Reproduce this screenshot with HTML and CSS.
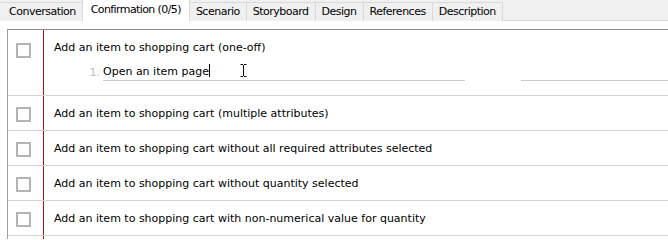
FILE: index.html
```html
<!DOCTYPE html>
<html lang="en">
<head>
  <meta charset="UTF-8" />
  <title>Confirmation</title>
  <link rel="stylesheet" href="styles.css">
</head>
<body>
  <div class="tabs">
    <div class="tab">Conversation</div>
    <div class="tab active">Confirmation (0/5)</div>
    <div class="tab">Scenario</div>
    <div class="tab">Storyboard</div>
    <div class="tab">Design</div>
    <div class="tab">References</div>
    <div class="tab">Description</div>
  </div>

  <div class="panel">
    <div class="list">
      <div class="row first">
        <div class="check"><span class="box"></span></div>
        <div class="body">
          <div class="title">Add an item to shopping cart (one-off)</div>
          <div class="steps">
            <span class="num">1.</span>
            <span class="field step">Open an item page<span class="caret"></span></span>
            <span class="field result"></span>
          </div>
          <svg class="ibeam" width="7" height="13" viewBox="0 0 7 13">
            <path d="M0.5 0.5h2.5M4 0.5h2.5M3.5 1v11M0.5 12.5h2.5M4 12.5h2.5" stroke="#000" stroke-width="1" fill="none"/>
          </svg>
        </div>
      </div>
      <div class="row">
        <div class="check"><span class="box"></span></div>
        <div class="body"><div class="title">Add an item to shopping cart (multiple attributes)</div></div>
      </div>
      <div class="row">
        <div class="check"><span class="box"></span></div>
        <div class="body"><div class="title">Add an item to shopping cart without all required attributes selected</div></div>
      </div>
      <div class="row">
        <div class="check"><span class="box"></span></div>
        <div class="body"><div class="title">Add an item to shopping cart without quantity selected</div></div>
      </div>
      <div class="row">
        <div class="check"><span class="box"></span></div>
        <div class="body"><div class="title">Add an item to shopping cart with non-numerical value for quantity</div></div>
      </div>
      <div class="row last">
        <div class="check"></div>
        <div class="body"></div>
      </div>
    </div>
  </div>
</body>
</html>
```

FILE: styles.css
```css
html, body {
  height: 240px;
}
body {
  margin: 0;
  font-family: "DejaVu Sans", sans-serif;
  font-size: 11px;
  color: #000;
  background: #fff;
  overflow: hidden;
}
.tabs {
  display: flex;
  align-items: flex-end;
  height: 20px;
  background: #f0f0f0;
  border-bottom: 1px solid #d9d9d9;
}
.tab {
  height: 18px;
  line-height: 18px;
  padding: 0 6px;
  border: 1px solid #d9d9d9;
  border-bottom: none;
  margin-right: -1px;
  margin-bottom: -1px;
  background: #f0f0f0;
  white-space: nowrap;
  letter-spacing: -0.5px;
}
.tab:first-child {
  border-left-color: #f0f0f0;
  padding-left: 8px;
}
.tab.active {
  height: 21px;
  line-height: 19px;
  padding: 0 8px;
  background: #fff;
  border-top: none;
  position: relative;
  z-index: 1;
  letter-spacing: -0.6px;
}
.panel {
  padding: 8px 0 0 7px;
}
.list {
  border-top: 1px solid #8c8c8c;
  border-left: 1px solid #a0a0a0;
}
.row {
  display: flex;
  height: 34px;
  border-bottom: 1px solid #d4d4d4;
}
.row.first {
  height: 65px;
}
.row.last {
  height: 3px;
  border-bottom: none;
}
.check {
  width: 35px;
  padding-top: 13px;
  padding-left: 8px;
  box-sizing: border-box;
}
.row + .row .check {
  padding-top: 11px;
}
.box {
  display: block;
  width: 11px;
  height: 11px;
  border: 2px solid #b4b4b4;
  background: #fff;
}
.body {
  flex: 1;
  border-left: 1px solid #a31515;
  padding-left: 10px;
  position: relative;
}
.title {
  height: 34px;
  line-height: 35px;
  white-space: nowrap;
}
.steps {
  display: flex;
  align-items: flex-end;
  height: 17px;
}
.num {
  width: 46px;
  text-align: right;
  padding-right: 3px;
  color: #c4b4c4;
  line-height: 16px;
}
.field {
  height: 16px;
  line-height: 16px;
  border-bottom: 1px solid #c8c8c8;
}
.step {
  width: 362px;
}
.result {
  margin-left: 56px;
  flex: 1;
}
.caret {
  display: inline-block;
  width: 1px;
  height: 13px;
  background: #000;
  vertical-align: -2px;
}
.ibeam {
  position: absolute;
  left: 196px;
  top: 34px;
}
```
